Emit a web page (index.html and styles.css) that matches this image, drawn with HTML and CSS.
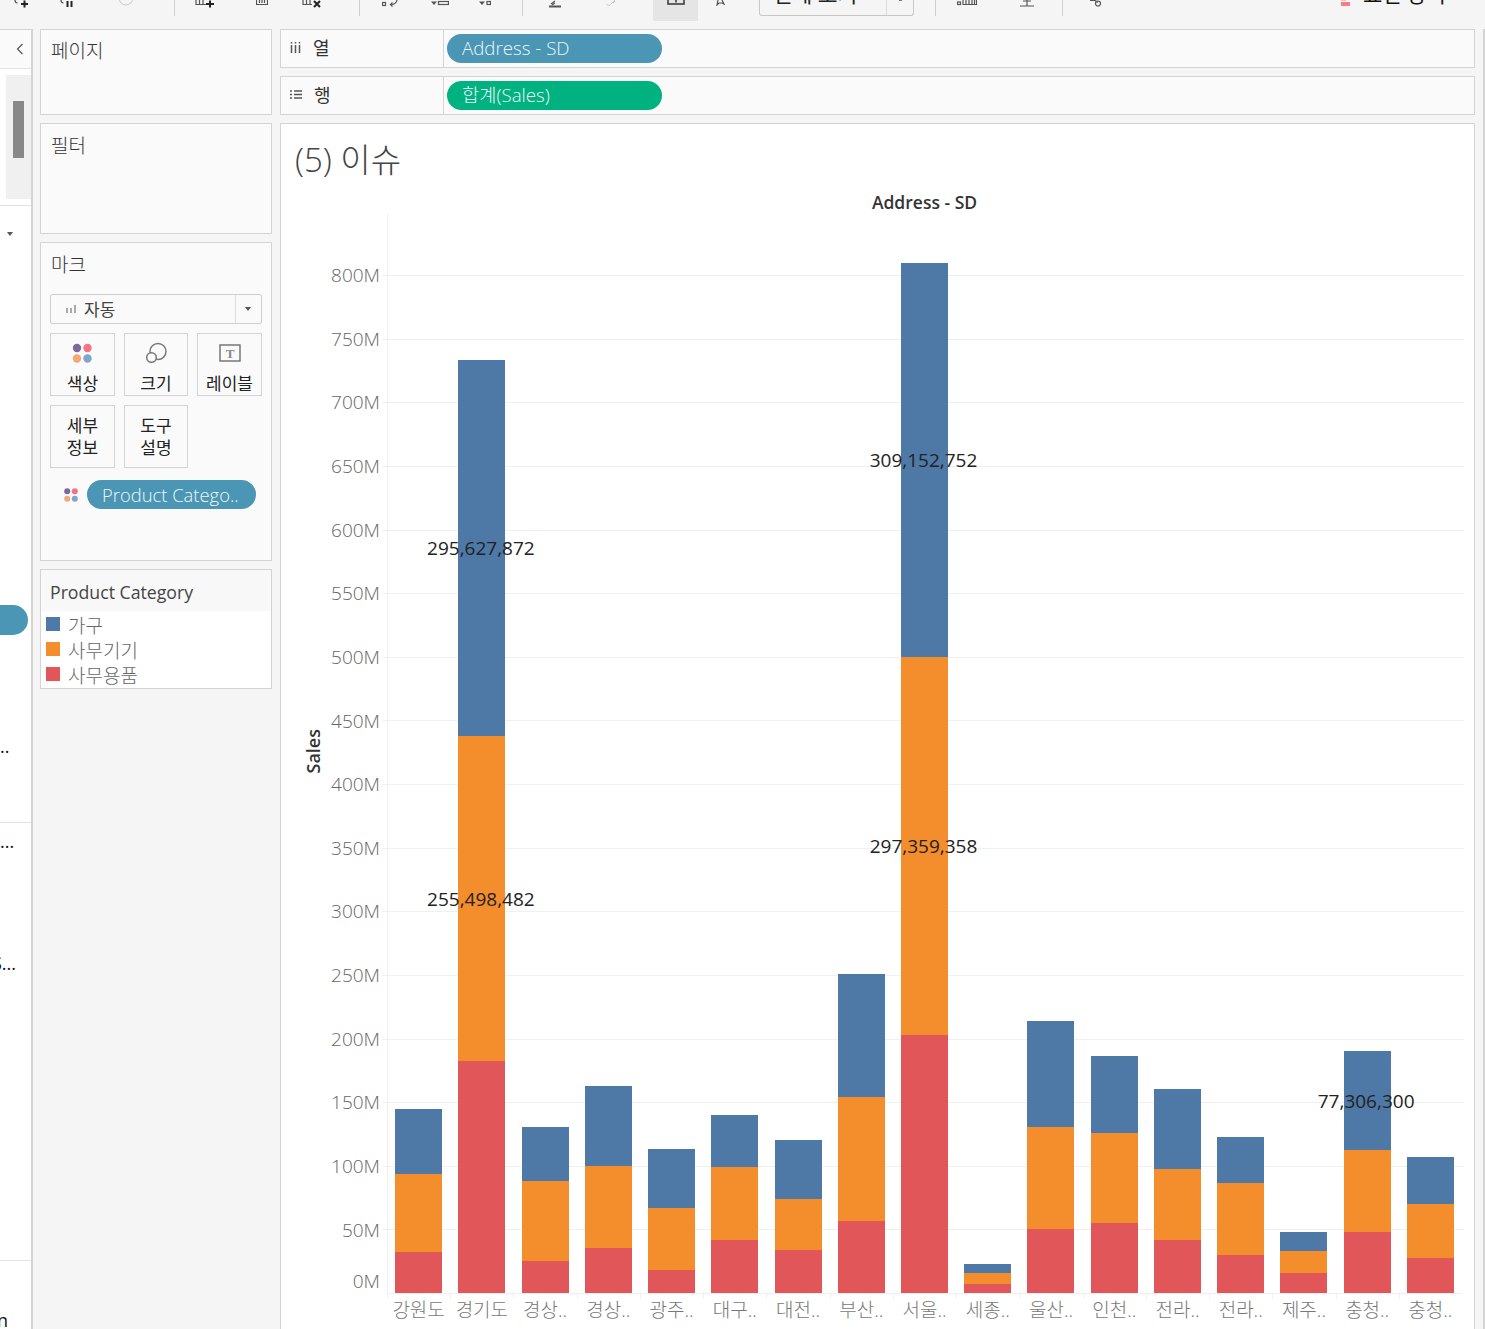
FILE: index.html
```html
<!DOCTYPE html>
<html lang="ko">
<head>
<meta charset="utf-8">
<title>(5) 이슈</title>
<link rel="stylesheet" href="styles.css">
</head>
<body>
<header class="toolbar">
  <svg class="tool" width="16" height="9" viewBox="0 0 16 9"><path class="gr" d="M1 0c0 2 .6 3 2.500 3"/><path class="bk" d="M7 4h7M10.500 .5v7"/></svg>
  <svg class="tool" width="14" height="9" viewBox="0 0 14 9"><path class="gr" d="M1 0c0 2 .6 3 2.500 3"/><path class="bk" d="M7.500 1v6M11.500 1v6"/></svg>
  <svg class="tool" width="16" height="6" viewBox="0 0 16 6"><circle class="lt" cx="8" cy="-2" r="7"/></svg>
  <i class="sep"></i>
  <svg class="tool" width="20" height="9" viewBox="0 0 20 9"><path class="gr" d="M1 0v4.500h11M4.500 0v4M8 0v4"/><path class="bk" d="M11 4h8M15 .5v7"/></svg>
  <svg class="tool" width="12" height="6" viewBox="0 0 12 6"><path class="gr" d="M.5 0v4.500h11v-4.500M3.500 0v3M6 0v3M8.500 0v3"/></svg>
  <svg class="tool" width="20" height="9" viewBox="0 0 20 9"><path class="gr" d="M1 0v4.500h9M4.500 0v4M8 0v4"/><path class="bk" d="M12 1l6 6M18 1l-6 6"/></svg>
  <i class="sep"></i>
  <svg class="tool" width="16" height="8" viewBox="0 0 16 8"><rect class="gr" x=".5" y="2.500" width="3" height="3"/><path class="gr" d="M15 0c-.5 3-3 4.500-6 4.500M10.500 2.500l-2 2 2 2"/></svg>
  <svg class="tool" width="18" height="7" viewBox="0 0 18 7"><path class="fl" d="M0 1.500h6l-3 3.500z"/><rect class="gr" x="7.500" y="1.500" width="10" height="3"/></svg>
  <svg class="tool" width="12" height="7" viewBox="0 0 12 7"><path class="fl" d="M0 1.500h6l-3 3.500z"/><rect class="gr" x="8" y="1.500" width="3.500" height="3"/></svg>
  <i class="sep"></i>
  <svg class="tool" width="12" height="8" viewBox="0 0 12 8"><path class="gr" d="M2 4l4-3M3 5l3-2"/><path class="bar" d="M0 5.500h12v2h-12z"/></svg>
  <svg class="tool" width="12" height="6" viewBox="0 0 12 6"><path class="lt" d="M1 4c0 2 3 2 4 0l4-4M7 3l2-2"/></svg>
  <div class="tool-on"><svg width="18" height="5" viewBox="0 0 18 5"><path class="dk" d="M1 0v4h16v-4M9 0v2.500"/></svg></div>
  <svg class="tool" width="9" height="6" viewBox="0 0 9 6"><path class="gr" d="M2 0l-1 5 2-2h3l2 1-2-4"/></svg>
  <div class="fit"><span class="fit-text">전체 보기</span><span class="fit-arrow"></span></div>
  <i class="sep"></i>
  <svg class="tool" width="20" height="6" viewBox="0 0 20 6"><rect class="gr" x=".5" y="2" width="3" height="2.500"/><path class="gr" d="M6 0v4.500h13.500v-4.500M9 0v4M12 0v4M15 0v4M17.500 0v4"/></svg>
  <svg class="tool" width="16" height="7" viewBox="0 0 16 7"><path class="gr" d="M8 0v6M1 6h14M4 1h8"/></svg>
  <i class="sep"></i>
  <svg class="tool" width="13" height="7" viewBox="0 0 13 7"><path class="gr" d="M0 .5h5l3 2"/><circle class="gr" cx="8" cy="3.500" r="2.500"/></svg>
  <div class="show-me">
    <svg class="show-icon" width="9" height="6" viewBox="0 0 9 6"><rect class="sm-a" x="0" y="0" width="5" height="1"/><rect class="sm-b" x="0" y="2" width="9" height="4"/></svg>
    <span class="show-text">표현 방식</span>
  </div>
</header>

<div class="workspace">
  <aside class="strip">
    <div class="strip-head"><svg width="8" height="12" viewBox="0 0 8 12"><path class="gr" d="M6.500 1l-5 5 5 5"/></svg></div>
    <div class="strip-scroll"><div class="track"><div class="thumb"></div></div></div>
    <div class="strip-sec strip-mid">
      <span class="strip-caret"></span>
      <div class="strip-pill"></div>
      <div class="strip-text">..</div>
    </div>
    <div class="strip-sec strip-low">
      <div class="strip-text">...</div>
      <div class="strip-text strip-gap cut">S...</div>
    </div>
    <div class="strip-end"><span class="strip-text cut2">n</span></div>
  </aside>

  <section class="side">
    <div class="card card-pages"><h2 class="card-title">페이지</h2></div>
    <div class="card card-filters"><h2 class="card-title">필터</h2></div>
    <div class="card card-marks">
      <h2 class="card-title">마크</h2>
      <div class="mark-select">
        <svg class="mark-bars" width="10" height="8" viewBox="0 0 10 8"><path d="M0 3h2v5h-2zM4 3h2v5h-2zM8 0h2v8h-2z"/></svg>
        <span class="mark-select-text">자동</span>
        <span class="mark-select-arrow"></span>
      </div>
      <div class="mark-grid">
        <div class="mark-btn">
          <svg class="mark-ico mark-ico-color" width="20" height="20" viewBox="0 0 20 20"><circle cx="5" cy="5" r="4.200" fill="#7b6a98"/><circle cx="15.500" cy="5" r="4.200" fill="#f8727f"/><circle cx="5" cy="15.500" r="4.200" fill="#f2a877"/><circle cx="15.500" cy="15.500" r="4.200" fill="#7fa6cc"/></svg>
          <span>색상</span>
        </div>
        <div class="mark-btn">
          <svg class="mark-ico" width="22" height="22" viewBox="0 0 22 22"><circle class="gs" cx="13" cy="9.500" r="8"/><circle class="gs wh" cx="6.500" cy="15.500" r="4.800"/></svg>
          <span>크기</span>
        </div>
        <div class="mark-btn">
          <svg class="mark-ico" width="22" height="20" viewBox="0 0 22 20"><rect class="gs" x="1" y="2" width="20" height="16"/><text x="11" y="14.500" class="t-glyph">T</text></svg>
          <span>레이블</span>
        </div>
        <div class="mark-btn mark-two"><span>세부<br>정보</span></div>
        <div class="mark-btn mark-two"><span>도구<br>설명</span></div>
      </div>
      <div class="mark-field">
        <svg width="14" height="14" viewBox="0 0 14 14"><circle cx="3.200" cy="3.200" r="3" fill="#7b6a98"/><circle cx="10.800" cy="3.200" r="3" fill="#f8727f"/><circle cx="3.200" cy="10.800" r="3" fill="#f2a877"/><circle cx="10.800" cy="10.800" r="3" fill="#7fa6cc"/></svg>
        <div class="pill pill-blue pill-field">Product Catego..</div>
      </div>
    </div>
    <div class="card card-legend">
      <h2 class="legend-title">Product Category</h2>
      <ul class="legend-list">
        <li><i class="swatch c-blue"></i>가구</li>
        <li><i class="swatch c-orange"></i>사무기기</li>
        <li><i class="swatch c-red"></i>사무용품</li>
      </ul>
    </div>
  </section>

  <main class="main">
    <div class="shelf">
      <div class="shelf-label"><svg width="11" height="11" viewBox="0 0 11 11"><path class="dk2" d="M1.500 3v8M5.500 3v8M9.500 3v8M1.500 0v1.500M5.500 0v1.500M9.500 0v1.500"/></svg><span>열</span></div>
      <div class="shelf-body"><div class="pill pill-blue pill-shelf">Address - SD</div></div>
    </div>
    <div class="shelf">
      <div class="shelf-label"><svg width="12" height="9" viewBox="0 0 12 9"><path class="dk2" d="M0 1h2M4 1h8M0 4.500h2M4 4.500h8M0 8h2M4 8h8"/></svg><span>행</span></div>
      <div class="shelf-body"><div class="pill pill-green pill-shelf">합계(Sales)</div></div>
    </div>

    <section class="viz">
      <h1 class="viz-title">(5) 이슈</h1>
      <div class="viz-head">Address - SD</div>
      <div class="chart">
        <div class="y-title"><span>Sales</span></div>
        <div class="y-axis">
          <div class="tick">800M</div><div class="tick">750M</div><div class="tick">700M</div><div class="tick">650M</div><div class="tick">600M</div><div class="tick">550M</div><div class="tick">500M</div><div class="tick">450M</div><div class="tick">400M</div><div class="tick">350M</div><div class="tick">300M</div><div class="tick">250M</div><div class="tick">200M</div><div class="tick">150M</div><div class="tick">100M</div><div class="tick">50M</div><div class="tick tick-zero">0M</div>
        </div>
        <div class="plot-col">
          <div class="plot">
            <div class="grid-lines"><i></i><i></i><i></i><i></i><i></i><i></i><i></i><i></i><i></i><i></i><i></i><i></i><i></i><i></i><i></i><i></i></div>
            <div class="bars">
              <div class="col"><div class="seg c-blue" style="height:65px"></div><div class="seg c-orange" style="height:78px"></div><div class="seg c-red" style="height:41px"></div></div>
              <div class="col"><div class="seg c-blue" style="height:376px"><span class="val">295,627,872</span></div><div class="seg c-orange" style="height:325px"><span class="val">255,498,482</span></div><div class="seg c-red" style="height:232px"></div></div>
              <div class="col"><div class="seg c-blue" style="height:54px"></div><div class="seg c-orange" style="height:80px"></div><div class="seg c-red" style="height:32px"></div></div>
              <div class="col"><div class="seg c-blue" style="height:80px"></div><div class="seg c-orange" style="height:82px"></div><div class="seg c-red" style="height:45px"></div></div>
              <div class="col"><div class="seg c-blue" style="height:59px"></div><div class="seg c-orange" style="height:62px"></div><div class="seg c-red" style="height:23px"></div></div>
              <div class="col"><div class="seg c-blue" style="height:52px"></div><div class="seg c-orange" style="height:73px"></div><div class="seg c-red" style="height:53px"></div></div>
              <div class="col"><div class="seg c-blue" style="height:59px"></div><div class="seg c-orange" style="height:51px"></div><div class="seg c-red" style="height:43px"></div></div>
              <div class="col"><div class="seg c-blue" style="height:123px"></div><div class="seg c-orange" style="height:124px"></div><div class="seg c-red" style="height:72px"></div></div>
              <div class="col"><div class="seg c-blue" style="height:394px"><span class="val">309,152,752</span></div><div class="seg c-orange" style="height:378px"><span class="val">297,359,358</span></div><div class="seg c-red" style="height:258px"></div></div>
              <div class="col"><div class="seg c-blue" style="height:9px"></div><div class="seg c-orange" style="height:11px"></div><div class="seg c-red" style="height:9px"></div></div>
              <div class="col"><div class="seg c-blue" style="height:106px"></div><div class="seg c-orange" style="height:102px"></div><div class="seg c-red" style="height:64px"></div></div>
              <div class="col"><div class="seg c-blue" style="height:77px"></div><div class="seg c-orange" style="height:90px"></div><div class="seg c-red" style="height:70px"></div></div>
              <div class="col"><div class="seg c-blue" style="height:80px"></div><div class="seg c-orange" style="height:71px"></div><div class="seg c-red" style="height:53px"></div></div>
              <div class="col"><div class="seg c-blue" style="height:46px"></div><div class="seg c-orange" style="height:72px"></div><div class="seg c-red" style="height:38px"></div></div>
              <div class="col"><div class="seg c-blue" style="height:19px"></div><div class="seg c-orange" style="height:22px"></div><div class="seg c-red" style="height:20px"></div></div>
              <div class="col"><div class="seg c-blue" style="height:99px"><span class="val">77,306,300</span></div><div class="seg c-orange" style="height:82px"></div><div class="seg c-red" style="height:61px"></div></div>
              <div class="col"><div class="seg c-blue" style="height:47px"></div><div class="seg c-orange" style="height:54px"></div><div class="seg c-red" style="height:35px"></div></div>
            </div>
          </div>
          <div class="x-axis">
            <span>강원도</span><span>경기도</span><span>경상..</span><span>경상..</span><span>광주..</span><span>대구..</span><span>대전..</span><span>부산..</span><span>서울..</span><span>세종..</span><span>울산..</span><span>인천..</span><span>전라..</span><span>전라..</span><span>제주..</span><span>충청..</span><span>충청..</span>
          </div>
        </div>
      </div>
    </section>
  </main>
  <div class="edge"></div>
</div>
</body>
</html>
```
FILE: styles.css
```css
* { box-sizing: border-box; }
html, body { margin: 0; height: 100%; }
body {
  width: 1485px;
  height: 1329px;
  overflow: hidden;
  display: flex;
  flex-direction: column;
  background: #f5f5f5;
  color: #333;
  font-family: "Open Sans", "Noto Sans CJK KR", sans-serif;
  font-size: 16px;
}
h1, h2, ul { margin: 0; padding: 0; font-weight: 400; }
ul { list-style: none; }
i { display: block; font-style: normal; }

/* svg paint classes */
.gr, .bk, .lt, .dk, .dk2, .gs { fill: none; }
.gr { stroke: #555; stroke-width: 1.2; }
.bk { stroke: #222; stroke-width: 2; }
.lt { stroke: #c9c9c9; stroke-width: 1; }
.dk { stroke: #333; stroke-width: 1.5; }
.dk2 { stroke: #555; stroke-width: 1.5; }
.fl { fill: #555; }
.bar { fill: #555; }
.gs { stroke: #777; stroke-width: 1.5; }
.wh { fill: #fafafa; }
.t-glyph { fill: #888; font: 700 13px "Liberation Serif", serif; text-anchor: middle; }

/* toolbar: icons are clipped by the top of the window */
.toolbar {
  flex: 0 0 29px;
  display: grid;
  grid-template-columns: 44px 46px 72px 13px 60px 54px 46px 25px 60px 40px 50px 13px 64px 50px 61px 44px 172px 22px 62px 58px 7px 66px 1fr;
  grid-template-rows: 29px;
  overflow: hidden;
}
.tool { justify-self: center; align-self: start; display: block; }
.sep { justify-self: end; width: 1px; height: 16px; background: #cfcfcf; }
.tool-on {
  justify-self: end;
  width: 45px;
  height: 21px;
  background: #e5e5e5;
  display: flex;
  justify-content: center;
}
.fit {
  justify-self: end;
  align-self: start;
  width: 155px;
  height: 16px;
  border: 1px solid #c8c8c8;
  border-top: 0;
  border-radius: 0 0 3px 3px;
  display: flex;
  overflow: hidden;
}
.fit-text {
  flex: 1;
  text-align: center;
  font-size: 21.500px;
  line-height: 28px;
  margin-top: -20px;
  color: #222;
  padding-right: 16px;
  white-space: nowrap;
}
.fit-arrow {
  width: 27px;
  border-left: 1px solid #dcdcdc;
  background: linear-gradient(#777, #777) 50% 0 / 3px 1px no-repeat;
}
.show-me { display: flex; align-items: flex-start; padding-left: 212px; overflow: hidden; }
.show-icon { flex: none; }
.show-text {
  margin-left: 13px;
  font-size: 21px;
  line-height: 28px;
  margin-top: -20px;
  color: #111;
  white-space: nowrap;
}
.sm-a { fill: #fbc7a0; }
.sm-b { fill: #f87c8a; }

/* workspace */
.workspace { flex: 1; display: flex; min-height: 0; }

.strip {
  flex: 0 0 33px;
  display: flex;
  flex-direction: column;
  background: #fff;
  border-right: 2px solid #d4d4d4;
  border-top: 1px solid #d4d4d4;
  overflow: hidden;
}
.strip-head {
  flex: 0 0 39px;
  background: #fafafa;
  border-bottom: 1px solid #e2e2e2;
  display: flex;
  align-items: center;
  justify-content: flex-end;
  padding-right: 7px;
}
.strip-scroll {
  flex: 0 0 137px;
  padding: 6px 0 0 6px;
  border-bottom: 1px solid #e2e2e2;
}
.track { height: 124px; background: #f0f0f0; padding: 26px 7px 0; }
.thumb { width: 11px; height: 57px; background: #888; }
.strip-sec { display: flex; flex-direction: column; border-bottom: 1px solid #e2e2e2; }
.strip-mid { flex: 0 0 617px; }
.strip-low { flex: 0 0 438px; padding-top: 7px; }
.strip-caret {
  display: block;
  margin: 26px 0 0 7px;
  width: 0;
  height: 0;
  border: 3px solid transparent;
  border-top: 4px solid #555;
  border-bottom: 0;
}
.strip-pill {
  margin-top: 369px;
  width: 28px;
  height: 30px;
  background: #4b96b4;
  border-radius: 0 15px 15px 0;
}
.strip-text { font-size: 18px; line-height: 22px; color: #111; white-space: nowrap; }
.strip-mid .strip-text { margin-top: 100px; }
.strip-gap { margin-top: 100px; }
.cut { margin-left: -8px; }
.strip-end { padding-top: 48px; }
.cut2 { display: block; margin-left: -3px; }

/* side cards */
.side {
  flex: 0 0 232px;
  margin-left: 7px;
  display: flex;
  flex-direction: column;
  gap: 8px;
}
.card { border: 1px solid #d4d4d4; background: #fafafa; }
.card-pages { height: 86px; }
.card-filters { height: 111px; }
.card-marks { height: 319px; }
.card-title {
  margin: 9px 0 0 10px;
  font-size: 19px;
  font-weight: 300;
  line-height: 24px;
  color: #333;
}
.card-filters .card-title, .card-marks .card-title { margin-top: 10px; }
.mark-select {
  margin: 17px 9px 0;
  height: 30px;
  border: 1px solid #cfcfcf;
  border-radius: 2px;
  display: flex;
  align-items: center;
  padding-left: 15px;
}
.mark-bars { fill: #aaa; }
.mark-select-text { margin-left: 8px; padding-bottom: 2px; font-size: 17px; color: #444; flex: 1; }
.mark-select-arrow {
  width: 26px;
  height: 100%;
  border-left: 1px solid #dcdcdc;
  position: relative;
}
.mark-select-arrow::after {
  content: "";
  position: absolute;
  left: 9px;
  top: 12px;
  border: 3.5px solid transparent;
  border-top: 4px solid #555;
  border-bottom: 0;
}
.mark-grid {
  margin: 9px 9px 0;
  display: grid;
  grid-template-columns: 65px 64px 65px;
  grid-auto-rows: 63px;
  gap: 9px;
}
.mark-btn {
  border: 1px solid #d4d4d4;
  display: flex;
  flex-direction: column;
  align-items: center;
  font-size: 17px;
  line-height: 22px;
  color: #222;
  text-align: center;
  padding-top: 8px;
}
.mark-ico { height: 22px; margin-bottom: 9px; flex: none; }
.mark-ico-color { margin-right: 2px; }
.mark-two { justify-content: center; padding: 0; }
.mark-field {
  margin: 12px 15px 0 23px;
  display: flex;
  align-items: center;
  gap: 9px;
}
.pill { color: #eef7fa; border-radius: 15px; white-space: nowrap; display: flex; align-items: center; }
.pill-blue { background: #4b96b4; }
.pill-green { background: #00b27f; }
.pill-field { flex: 1; height: 29px; padding-left: 15px; font-size: 18.400px; font-weight: 300; }
.card-legend { height: 120px; background: #fff; }
.legend-title {
  height: 41px;
  background: #f8f8f8;
  padding: 10px 0 0 9px;
  font-size: 17.700px;
  line-height: 24px;
  color: #444;
}
.legend-list { padding: 0 0 0 5px; }
.legend-list li {
  height: 25px;
  display: flex;
  align-items: center;
  padding-top: 2px;
  font-size: 19px;
  font-weight: 300;
  color: #666;
}
.swatch { width: 14px; height: 14px; margin: -2px 8px 0 0; }
.c-blue { background: #4e78a6; }
.c-orange { background: #f48d2c; }
.c-red { background: #e15759; }

/* main column */
.main {
  flex: 0 0 1195px;
  margin-left: 8px;
  display: flex;
  flex-direction: column;
  gap: 8px;
  min-height: 0;
}
.shelf { flex: 0 0 39px; display: flex; border: 1px solid #d4d4d4; background: #fafafa; }
.shelf-label {
  flex: 0 0 163px;
  border-right: 1px solid #d4d4d4;
  display: flex;
  align-items: center;
  gap: 12px;
  padding: 0 0 3px 9px;
  font-size: 18px;
  color: #333;
}
.shelf-body { flex: 1; display: flex; align-items: center; padding-left: 3px; }
.pill-shelf { width: 215px; height: 29px; padding: 0 0 2px 15px; font-size: 18.700px; font-weight: 300; }
.pill-green { padding-bottom: 5px; }

.viz {
  flex: 1;
  min-height: 0;
  background: #fff;
  border: 1px solid #d4d4d4;
  border-bottom: 0;
  display: flex;
  flex-direction: column;
}
.viz-title {
  flex: 0 0 70px;
  padding: 15px 0 0 14px;
  font-size: 33px;
  font-weight: 300;
  line-height: 42px;
  color: #444;
}
.viz-head {
  flex: 0 0 19px;
  padding-left: 106px;
  width: 1181px;
  text-align: center;
  font-size: 17.500px;
  font-weight: 600;
  line-height: 17px;
  color: #333;
}
.chart { display: flex; flex: 1; min-height: 0; }
.y-title {
  flex: 0 0 42px;
  height: 1080px;
  display: flex;
  align-items: center;
  justify-content: flex-end;
  padding-bottom: 4px;
}
.y-title span {
  writing-mode: vertical-rl;
  transform: rotate(180deg);
  width: 20px;
  line-height: 20px;
  font-size: 18px;
  font-weight: 600;
  color: #333;
}
.y-axis {
  flex: 0 0 57px;
  height: 1080px;
  display: flex;
  flex-direction: column;
  justify-content: flex-end;
  margin-bottom: -32px;
  transform: translateY(31.800px);
}
.tick {
  flex: 0 0 63.625px;
  display: flex;
  align-items: center;
  justify-content: flex-end;
  font-size: 19px;
  font-weight: 300;
  color: #666;
}
.tick-zero { transform: translateY(-12px); }
.plot-col { flex: 0 0 1075px; margin-left: 7px; }
.plot {
  position: relative;
  height: 1080px;
  border-left: 1px solid #f0f0f0;
}
.grid-lines {
  position: absolute;
  left: -6px;
  right: -2px;
  bottom: 0;
  display: flex;
  flex-direction: column;
}
.grid-lines i { height: 63.625px; border-top: 1px solid #f0f0f0; }
.bars {
  position: relative;
  height: 100%;
  display: flex;
  margin-left: -1px;
}
.col {
  flex: 1 1 0;
  display: flex;
  flex-direction: column;
  justify-content: flex-end;
  align-items: center;
}
.seg {
  width: 47px;
  flex: none;
  display: flex;
  align-items: center;
  justify-content: center;
}
.val { white-space: nowrap; font-size: 19px; color: #222; position: relative; z-index: 1; margin-right: 2px; }
.x-axis {
  display: flex;
  border-top: 1px solid #f0f0f0;
  height: 28px;
  background: repeating-linear-gradient(90deg, #f0f0f0 0 1px, transparent 1px 63.235px) 0 0 / 100% 5px no-repeat;
}
.x-axis span {
  flex: 1 1 0;
  text-align: center;
  font-size: 19px;
  font-weight: 300;
  line-height: 32px;
  color: #777;
  white-space: nowrap;
}
.edge { margin-left: 8px; width: 2px; background: #d4d4d4; }
```
